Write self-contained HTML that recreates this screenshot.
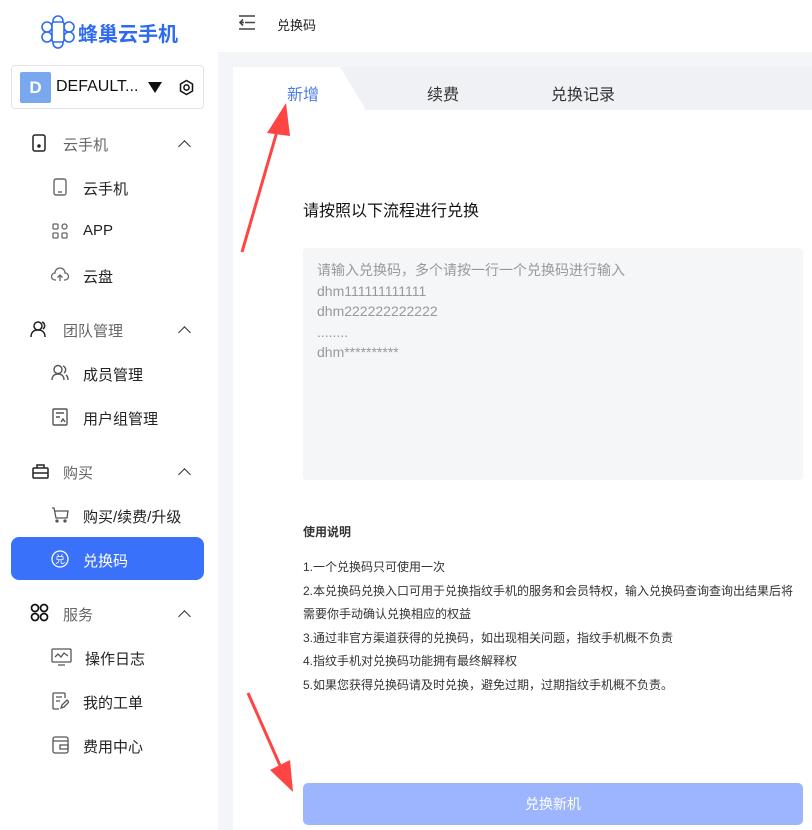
<!DOCTYPE html>
<html><head><meta charset="utf-8"><style>
*{margin:0;padding:0;box-sizing:border-box}
body{width:812px;height:830px;overflow:hidden;background:#f3f5f9;font-family:"Liberation Sans","Noto Sans CJK SC",sans-serif;position:relative;color:#222}
.side{position:absolute;left:0;top:0;width:218px;height:830px;background:#fff}
.logo{position:absolute;left:40px;top:14px;display:flex;align-items:center;gap:2px;color:#2f6bf0;font-size:20px;font-weight:bold}
.acct{position:absolute;left:11px;top:65px;width:193px;height:44px;border:1px solid #e2e4ea;border-radius:4px}
.acct .d{position:absolute;left:8px;top:6px;width:31px;height:31px;background:#7aa8ee;color:#fff;font-weight:bold;font-size:17px;text-align:center;line-height:31px;border-radius:2px}
.acct .n{position:absolute;left:44px;top:12px;font-size:16px;color:#111}
.it{position:absolute;font-size:15px;color:#222}
.grp{color:#666}
.ic{position:absolute}
.chev{position:absolute;left:180px;width:9px;height:9px;border-left:1.3px solid #333;border-top:1.3px solid #333;transform:rotate(45deg)}
.act{position:absolute;left:11px;top:537px;width:193px;height:43px;background:#3a71fb;border-radius:8px}
.top{position:absolute;left:218px;top:0;width:594px;height:52px;background:#fff}
.card{position:absolute;left:233px;top:67px;width:579px;height:763px;background:#fff}
.tabs{position:absolute;left:340px;top:67px;width:472px;height:43px;background:#eff1f5}
.tabcut{position:absolute;left:340px;top:67px;width:0;height:0;border-bottom:43px solid #fff;border-right:26px solid transparent}
.t{position:absolute;top:81px;font-size:16px;color:#333}
.ta{position:absolute;left:303px;top:248px;width:500px;height:232px;background:#f5f6f8;border-radius:4px;padding:12px 14px;color:#999;font-size:14px;line-height:20.5px}
.notes{position:absolute;left:303px;font-size:12px;color:#333}
.btn{position:absolute;left:303px;top:783px;width:500px;height:42px;background:#9db5fd;border-radius:5px;color:#fff;text-align:center;line-height:42px;font-size:14px}
</style></head><body>
<div class="side">
 <div class="logo"><svg width="36" height="36" viewBox="0 0 36 36" fill="none" stroke="#2f6bf0" stroke-width="1.6"><circle cx="18" cy="7" r="5"/><circle cx="18" cy="29" r="5"/><circle cx="7" cy="13" r="5"/><circle cx="29" cy="13" r="5"/><circle cx="7" cy="23" r="5"/><circle cx="29" cy="23" r="5"/><rect x="12" y="8" width="12" height="20" rx="2" fill="#fff"/></svg>蜂巢云手机</div>
 <div class="acct"><div class="d">D</div><div class="n">DEFAULT...</div>
  <svg class="ic" style="left:136px;top:16px" width="14" height="11"><path d="M0 0H14L7 11Z" fill="#111"/></svg>
  <svg class="ic" style="left:166px;top:13px" width="17" height="17" fill="none" stroke="#111" stroke-width="1.5"><path d="M8.5 1.5L14.5 5V12L8.5 15.5L2.5 12V5Z"/><circle cx="8.5" cy="8.5" r="2.6"/></svg></div>

 <svg class="ic" style="left:32px;top:134px" width="14" height="18" fill="none" stroke="#222" stroke-width="1.5"><rect x="1" y="1" width="12" height="16" rx="2"/><circle cx="7" cy="12" r="1" fill="#222"/></svg>
 <div class="it grp" style="left:63px;top:134px">云手机</div><div class="chev" style="top:142px"></div>
 <svg class="ic" style="left:53px;top:178px" width="14" height="18" fill="none" stroke="#666" stroke-width="1.4"><rect x="1" y="1" width="12" height="16" rx="2"/><path d="M5 14H9"/></svg>
 <div class="it" style="left:83px;top:178px">云手机</div>
 <svg class="ic" style="left:52px;top:223px" width="16" height="16" fill="none" stroke="#666" stroke-width="1.3"><rect x="1" y="1" width="5" height="5" rx="1"/><rect x="10" y="1" width="5" height="5" rx="2.5"/><rect x="1" y="10" width="5" height="5" rx="1"/><rect x="10" y="10" width="5" height="5" rx="1"/></svg>
 <div class="it" style="left:83px;top:222px">APP</div>
 <svg class="ic" style="left:51px;top:267px" width="18" height="15" fill="none" stroke="#666" stroke-width="1.3"><path d="M5 13H4A3.5 3.5 0 0 1 4 6A5 5 0 0 1 14 6A3.5 3.5 0 0 1 14 13H13M9 14V8M6.5 10.5L9 8L11.5 10.5"/></svg>
 <div class="it" style="left:83px;top:266px">云盘</div>

 <svg class="ic" style="left:30px;top:320px" width="18" height="18" fill="none" stroke="#222" stroke-width="1.5"><circle cx="8" cy="6" r="4"/><path d="M1 17C1 12 4 10 8 10S15 12 15 17M12 2A4 4 0 0 1 13 9"/></svg>
 <div class="it grp" style="left:63px;top:320px">团队管理</div><div class="chev" style="top:328px"></div>
 <svg class="ic" style="left:51px;top:364px" width="18" height="17" fill="none" stroke="#555" stroke-width="1.4"><circle cx="7" cy="5.5" r="4"/><path d="M1 16C1 11.5 4 10 7 10S13 11.5 13 16M12 2A4 4 0 0 1 13 9M15 11C16.5 12 17 14 17 16"/></svg>
 <div class="it" style="left:83px;top:364px">成员管理</div>
 <svg class="ic" style="left:52px;top:408px" width="16" height="18" fill="none" stroke="#555" stroke-width="1.4"><rect x="1" y="1" width="14" height="16" rx="1"/><path d="M4 5H12M4 9H8M9 14L11 11L13 14"/></svg>
 <div class="it" style="left:83px;top:408px">用户组管理</div>

 <svg class="ic" style="left:32px;top:463px" width="17" height="16" fill="none" stroke="#222" stroke-width="1.5"><rect x="1" y="5" width="15" height="10" rx="1"/><path d="M5 5V2H12V5M1 10H16"/></svg>
 <div class="it grp" style="left:63px;top:462px">购买</div><div class="chev" style="top:470px"></div>
 <svg class="ic" style="left:51px;top:507px" width="18" height="16" fill="none" stroke="#555" stroke-width="1.3"><path d="M1 1H3L5 11H16L17 4H4"/><circle cx="6" cy="14" r="1" fill="#555"/><circle cx="14" cy="14" r="1" fill="#555"/></svg>
 <div class="it" style="left:83px;top:506px">购买/续费/升级</div>
 <div class="act"></div>
 <svg class="ic" style="left:51px;top:550px" width="18" height="18" fill="none" stroke="#fff" stroke-width="1.3"><circle cx="9" cy="9" r="8"/><text x="9" y="13" font-size="10" fill="#fff" stroke="none" text-anchor="middle" font-family="Noto Sans CJK SC">兑</text></svg>
 <div class="it" style="left:83px;top:550px;color:#fff">兑换码</div>

 <svg class="ic" style="left:30px;top:603px" width="19" height="19" fill="none" stroke="#111" stroke-width="1.7"><circle cx="5" cy="5" r="3.5"/><circle cx="14" cy="5" r="3.5"/><circle cx="5" cy="14" r="3.5"/><circle cx="14" cy="14" r="3.5"/></svg>
 <div class="it grp" style="left:63px;top:604px">服务</div><div class="chev" style="top:612px"></div>
 <svg class="ic" style="left:51px;top:648px" width="21" height="18" fill="none" stroke="#555" stroke-width="1.3"><rect x="1" y="1" width="19" height="13" rx="1"/><path d="M4 9L7 6L10 9L13 5L17 8M7 17H14"/></svg>
 <div class="it" style="left:85px;top:648px">操作日志</div>
 <svg class="ic" style="left:52px;top:692px" width="17" height="18" fill="none" stroke="#555" stroke-width="1.3"><path d="M13 6V2Q13 1 12 1H2Q1 1 1 2V16Q1 17 2 17H7M4 5H10M4 9H8M9 16L10 13L15 8L17 10L12 15Z"/></svg>
 <div class="it" style="left:83px;top:692px">我的工单</div>
 <svg class="ic" style="left:52px;top:736px" width="17" height="18" fill="none" stroke="#555" stroke-width="1.3"><rect x="1" y="1" width="15" height="16" rx="2"/><path d="M1 5H16M8 9H16V13H8Z"/></svg>
 <div class="it" style="left:83px;top:736px">费用中心</div>
</div>

<div class="top">
 <svg style="position:absolute;left:20px;top:14px" width="18" height="17" fill="none" stroke="#444" stroke-width="1.6"><path d="M1 2H17M7 8.5H17M1 15H17M5 5.5L2 8.5L5 11.5M2 8.5H6"/></svg>
 <div style="position:absolute;left:59px;top:15px;font-size:13px;color:#222">兑换码</div>
</div>
<div class="card"></div>
<div class="tabs"></div><div class="tabcut"></div>
<div class="t" style="left:287px;color:#4b7bea">新增</div>
<div class="t" style="left:427px">续费</div>
<div class="t" style="left:551px">兑换记录</div>

<div style="position:absolute;left:303px;top:197px;font-size:16px;color:#111">请按照以下流程进行兑换</div>
<div class="ta">请输入兑换码，多个请按一行一个兑换码进行输入<br>dhm111111111111<br>dhm222222222222<br>........<br>dhm**********</div>
<div class="notes" style="top:523px;font-weight:bold">使用说明</div>
<div class="notes" style="top:556px;line-height:23.5px;width:500px">1.一个兑换码只可使用一次<br>2.本兑换码兑换入口可用于兑换指纹手机的服务和会员特权，输入兑换码查询查询出结果后将需要你手动确认兑换相应的权益<br>3.通过非官方渠道获得的兑换码，如出现相关问题，指纹手机概不负责<br>4.指纹手机对兑换码功能拥有最终解释权<br>5.如果您获得兑换码请及时兑换，避免过期，过期指纹手机概不负责。</div>
<div class="btn">兑换新机</div>

<svg style="position:absolute;left:0;top:0" width="812" height="830">
 <path d="M242 252L278 128" stroke="#f44" stroke-width="3"/><path d="M286 103L267 133L290 136Z" fill="#f44"/>
 <path d="M248 693L282 770" stroke="#f44" stroke-width="3"/><path d="M293 792L270 770L290 760Z" fill="#f44"/>
</svg>
</body></html>
